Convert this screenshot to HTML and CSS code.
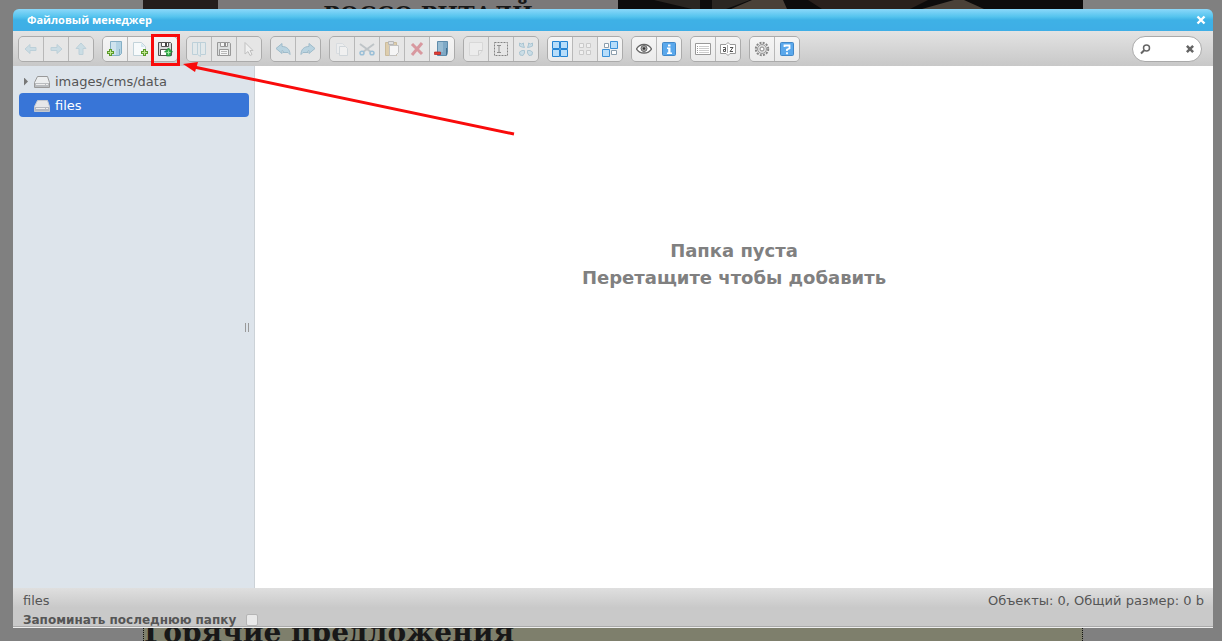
FILE: index.html
```html
<!DOCTYPE html>
<html lang="ru">
<head>
<meta charset="utf-8">
<title>Файловый менеджер</title>
<link rel="stylesheet" href="styles.css">
</head>
<body>
<div class="page" aria-hidden="true">
  <div class="page-column">
    <div class="page-top">
      <div class="photo-small"></div>
      <div class="promo">РОССО РИТАЛЙ</div>
      <svg class="photo-large" viewBox="0 0 465 9" preserveAspectRatio="none">
        <path fill="#0d0c0c" d="M0 0h465v9H0z"/>
        <path fill="#2a2622" d="M36 0h46v9H74zM94 0h38l-24 9H94z"/>
        <path fill="#4a4138" d="M134 0h31l4 9h-56zM336 0h10l20 9h-62z"/>
        <path fill="#2a211d" d="M190 0h120l-18 9H204z"/>
      </svg>
    </div>
    <div class="page-bottom">Горячие предложения</div>
  </div>
</div>

<main class="dialog">
  <header class="titlebar">
    <h1 class="title">Файловый менеджер</h1>
    <button class="close" type="button" aria-label="Закрыть"><svg width="10" height="10" viewBox="0 0 10 10"><path d="M1.5 1.5l7 7M8.5 1.5l-7 7" stroke="#fff" stroke-width="2.4"/></svg></button>
  </header>

  <div class="toolbar">
    <div class="group">
      <button class="tool off" type="button" aria-label="Назад"><svg class="icon" viewBox="0 0 16 16"><path fill="#a4cfe2" stroke="#7fb0c6" d="M2 8l5-4.500v3h6v3H7v3z"/></svg></button>
      <button class="tool off" type="button" aria-label="Вперёд"><svg class="icon" viewBox="0 0 16 16"><path fill="#a4cfe2" stroke="#7fb0c6" d="M14 8L9 3.500v3H3v3h6v3z"/></svg></button>
      <button class="tool off" type="button" aria-label="Вверх"><svg class="icon" viewBox="0 0 16 16"><path fill="#a4cfe2" stroke="#7fb0c6" d="M8 2l5 5.500h-3v6H6v-6H3z"/></svg></button>
    </div>
    <div class="group">
      <button class="tool" type="button" aria-label="Новая папка"><svg class="icon" viewBox="0 0 16 16"><path fill="#b3d3e4" stroke="#86afc5" d="M3.500.5h11v12l-2 2h-9z"/><path fill="#cfe3ee" d="M4 1h5v13H4z"/><path stroke="#86afc5" d="M12.500 8v6"/><path stroke="#5b9b2b" stroke-width="3" d="M3.500 8v7M0 11.500h7"/><path stroke="#c2e790" d="M3.500 9v5M1 11.500h5"/></svg></button>
      <button class="tool" type="button" aria-label="Новый файл"><svg class="icon" viewBox="0 0 16 16"><path fill="#f7fafb" stroke="#c3d3da" d="M1.500 1.500h8l4 4v9h-12z"/><path fill="#d5e8f0" d="M9 2v4h4z"/><path stroke="#5b9b2b" stroke-width="3" d="M12.500 8v7M9 11.500h7"/><path stroke="#c2e790" d="M12.500 9v5M10 11.500h5"/></svg></button>
      <button class="tool" type="button" aria-label="Загрузить файлы"><svg class="icon" viewBox="0 0 16 16"><path fill="#d8dadb" stroke="#555" d="M1.500 1.500h12l1 1v12h-13z"/><path fill="#fff" stroke="#555" d="M4.500 1.500h7v4h-7zM3.500 8.500h9v6h-9z"/><path fill="#444" d="M8 2h2v3H8z"/><path fill="#32ae4a" stroke="#178331" stroke-width=".7" d="M11.500 7l4 4h-2v4h-4v-4h-2z"/><path stroke="#a5eba6" d="M11.500 9.500v4M9.500 11.500h4"/></svg></button>
    </div>
    <div class="group">
      <button class="tool off" type="button" aria-label="Открыть"><svg class="icon" viewBox="0 0 16 16"><path fill="#dceaf0" stroke="#7fb0c6" d="M1.500 1.500h13v12h-5v2l-3-2h-5zM6.500 2v11M9.500 2v11"/></svg></button>
      <button class="tool half" type="button" aria-label="Сохранить"><svg class="icon" viewBox="0 0 16 16"><path fill="#d8dadb" stroke="#666" d="M1.500 1.500h12l1 1v12h-13z"/><path fill="#fff" stroke="#666" d="M4.500 1.500h7v4h-7zM3.500 8.500h9v6h-9z"/><path fill="#555" d="M8 2h2v3H8z"/><path stroke="#999" d="M5 10.500h6M5 12.500h6"/></svg></button>
      <button class="tool off" type="button" aria-label="Выбрать"><svg class="icon" viewBox="0 0 16 16"><path fill="#fff" stroke="#888" d="M4 1.500l8 8H9l2 4-2 1-2-4-3 2.500z"/></svg></button>
    </div>
    <div class="group">
      <button class="tool half" type="button" aria-label="Отменить"><svg class="icon" viewBox="0 0 16 16"><path fill="#9cc7dd" stroke="#6f9fb8" d="M1 7.500l6-5v3c5 0 8 3 8 8-1-1-1-1-2-2H8c1-1 0-2-1-2v3z"/></svg></button>
      <button class="tool half" type="button" aria-label="Повторить"><svg class="icon" viewBox="0 0 16 16"><path fill="#9cc7dd" stroke="#6f9fb8" d="M15 7.500l-6-5v3c-5 0-8 3-8 8 1-1 1-1 2-2h5c-1-1 0-2 1-2v3z"/></svg></button>
    </div>
    <div class="group">
      <button class="tool off" type="button" aria-label="Копировать"><svg class="icon" viewBox="0 0 16 16"><path fill="#f4f7f9" stroke="#c3ced6" d="M2.500 2.500h6l2 2v8h-8z"/><path fill="#fff" stroke="#aebdc8" d="M5.500 5.500h6l2 2v7h-8z"/></svg></button>
      <button class="tool half" type="button" aria-label="Вырезать"><svg class="icon" viewBox="0 0 16 16"><path stroke="#a3adb3" stroke-width="2" d="M1 3l11 8M15 3L4 11"/><ellipse cx="3" cy="12" rx="2" ry="1.800" fill="none" stroke="#6aa6cd" stroke-width="1.500"/><ellipse cx="13" cy="12" rx="2" ry="1.800" fill="none" stroke="#6aa6cd" stroke-width="1.500"/></svg></button>
      <button class="tool half" type="button" aria-label="Вставить"><svg class="icon" viewBox="0 0 16 16"><path fill="#d8bd88" stroke="#b89e6c" d="M1.500 1.500h11v13h-11z"/><path fill="#ddd" stroke="#999" d="M4.500.5h5v3h-5z"/><path fill="#fff" stroke="#aaa" d="M5.500 4.500h9v7l-3 3h-6z"/></svg></button>
      <button class="tool half" type="button" aria-label="Удалить"><svg class="icon" viewBox="0 0 16 16"><path stroke="#cf6570" stroke-width="3" d="M3 3l10 10M13 2L3 14"/></svg></button>
      <button class="tool" type="button" aria-label="Очистить папку"><svg class="icon" viewBox="0 0 16 16"><path fill="#7fa9c6" stroke="#5f8cab" d="M3.500.5h10v11l-1 3h-9z"/><path fill="#98bcd3" d="M4 1h5v10H4z"/><path stroke="#44718f" d="M12.500 7v7"/><path fill="#e13b33" stroke="#b12320" stroke-width=".7" d="M.5 11h6v2.500h-6z"/></svg></button>
    </div>
    <div class="group">
      <button class="tool off" type="button" aria-label="Дублировать"><svg class="icon" viewBox="0 0 16 16"><path fill="#f6f6f6" stroke="#c3c3c3" d="M1.500 1.500h13v8l-4 5h-9z"/><path fill="none" stroke="#aaa" d="M14.500 9.500h-4v5"/></svg></button>
      <button class="tool half" type="button" aria-label="Переименовать"><svg class="icon" viewBox="0 0 16 16"><path fill="none" stroke="#444" stroke-dasharray="2 1" d="M1.500 1.500h13v13h-13z"/><path stroke="#555" fill="none" d="M4 4.500h4M6 5v6M4 11.500h4"/></svg></button>
      <button class="tool half" type="button" aria-label="Изменить размер"><svg class="icon" viewBox="0 0 16 16"><path fill="#b9d8e7" stroke="#83afc5" d="M1.500 2l2 1 2-1v2l1 2.500L4 6 1.500 5zM14.500 2l-2 1-2-1v2l-1 2.500L12 6l2.500-1zM2 14l-.5-3L4 9.500l2.500 0V12L5 14.500zM14 14l.5-3L12 9.500l-2.500 0V12l1.500 2.500z"/></svg></button>
    </div>
    <div class="group">
      <button class="tool" type="button" aria-label="Выделить всё"><svg class="icon" viewBox="0 0 16 16"><path fill="#b7ddfa" stroke="#2584d3" d="M.5.5h7v7h-7zM8.500.5h7v7h-7zM.5 8.500h7v7h-7zM8.500 8.500h7v7h-7z"/></svg></button>
      <button class="tool off" type="button" aria-label="Снять выделение"><svg class="icon" viewBox="0 0 16 16"><path fill="#fff" stroke="#a0a0a0" d="M2.500 2.500h4v4h-4zM9.500 2.500h4v4h-4zM2.500 9.500h4v4h-4zM9.500 9.500h4v4h-4z"/></svg></button>
      <button class="tool" type="button" aria-label="Обратить выделение"><svg class="icon" viewBox="0 0 16 16"><path fill="#fff" stroke="#8c9eac" d="M2.500 2.500h4v4h-4zM9.500 9.500h5v4h-5z"/><path fill="#b7ddfa" stroke="#3a90d8" d="M8.500.5h7v7h-7zM.5 8.500h7v7h-7z"/></svg></button>
    </div>
    <div class="group">
      <button class="tool" type="button" aria-label="Просмотр"><svg class="icon" viewBox="0 0 16 16"><path fill="#fff" stroke="#666" stroke-width="1.300" d="M.5 8Q3 3.500 8 3.500T15.500 8Q13 12 8 12T.5 8z"/><circle cx="8" cy="7.500" r="3" fill="#aaa" stroke="#666"/><circle cx="8" cy="7.500" r="1.300" fill="#333"/></svg></button>
      <button class="tool" type="button" aria-label="Свойства"><svg class="icon" viewBox="0 0 16 16"><rect x="1.500" y="1.500" width="13" height="13" rx="1" fill="#5aa8ec" stroke="#4288c8"/><path fill="#fff" d="M7 3.500h2.500v2H7zM6 6.500h3.500v5H11V13H6v-1.500h1.200V8H6z"/></svg></button>
    </div>
    <div class="group">
      <button class="tool" type="button" aria-label="Список"><svg class="icon" viewBox="0 0 16 16"><path fill="#fff" stroke="#999" d="M.5 2.500h15v11H.5z"/><path stroke="#ccc" d="M4 5.500h10M4 7.500h10M4 9.500h10M4 11.500h10"/><path stroke="#999" stroke-dasharray="1 1" d="M2.500 5v8"/></svg></button>
      <button class="tool" type="button" aria-label="Сортировка"><svg class="icon" viewBox="0 0 16 16"><path fill="#fff" stroke="#999" d="M.5 3.500H6l2-2 2 2h5.500v9H10l-2 2-2-2H.5z"/><path fill="none" stroke="#555" d="M3 6.500h2.500v4h-2v-2h2M10 6.500h3l-3 4h3"/><path stroke="#aaa" d="M7.500 4v8"/></svg></button>
    </div>
    <div class="group">
      <button class="tool" type="button" aria-label="Настройки"><svg class="icon" viewBox="0 0 16 16"><circle cx="8" cy="8" r="6.200" fill="none" stroke="#888" stroke-width="2" stroke-dasharray="2 1.240"/><circle cx="8" cy="8" r="4.500" fill="#ddd" stroke="#999"/><circle cx="8" cy="8" r="2" fill="#fff" stroke="#888"/></svg></button>
      <button class="tool" type="button" aria-label="Помощь"><svg class="icon" viewBox="0 0 16 16"><rect x="1.500" y="1.500" width="13" height="13" rx="1" fill="#5aa8ec" stroke="#4288c8"/><path fill="none" stroke="#fff" stroke-width="1.800" d="M5.500 6V4.500h5v3L8 8.500V10M8 11.300v2"/></svg></button>
    </div>
    <label class="search">
      <svg width="11" height="11" viewBox="0 0 11 11"><circle cx="6.500" cy="4" r="3" fill="none" stroke="#666" stroke-width="1.500"/><path stroke="#666" stroke-width="2" d="M4.200 6.300L1 9.500"/></svg>
      <input class="search-input" type="text" aria-label="Поиск">
      <svg width="8" height="8" viewBox="0 0 9 9"><path stroke="#666" stroke-width="2.800" d="M1 1l7 7M8 1L1 8"/></svg>
    </label>
  </div>

  <div class="work">
    <nav class="tree">
      <a class="node" href="#data"><span class="twist"></span><svg class="drive" viewBox="0 0 16 14"><path fill="#eceeef" stroke="#999" d="M3.500 1.500h10l2 6v5H.5v-5z"/><path fill="#b9bcbf" d="M1 8h14v4H1z"/><path stroke="#eee" d="M2 9.500h9M12 9.500h2"/></svg>images/cms/data</a>
      <a class="node selected" href="#files"><span class="twist none"></span><svg class="drive" viewBox="0 0 16 14"><path fill="#e6e7e9" stroke="#c3c8d0" d="M3.500 1.500h10l2 6v5H.5v-5z"/><path fill="#b5b9c1" d="M1 8h14v4H1z"/><path stroke="#eee" d="M2 9.500h9M12 9.500h2"/></svg>files</a>
      <span class="handle"></span>
    </nav>
    <section class="files">
      <p class="empty">Папка пуста<br>Перетащите чтобы добавить</p>
    </section>
  </div>

  <footer class="footer">
    <div class="status"><span>files</span><span>Объекты: 0, Общий размер: 0 b</span></div>
    <div class="remember"><label for="remember">Запоминать последнюю папку</label><input class="check" id="remember" type="checkbox"></div>
  </footer>
</main>

<svg class="callout" width="380" height="110" viewBox="0 0 380 110" aria-hidden="true">
  <path fill="none" stroke="#f90b0b" stroke-width="3" d="M2.500 3.500h26v29h-26z"/>
  <path stroke="#f90b0b" stroke-width="3" d="M44 35l320 67"/>
  <path fill="#f90b0b" d="M33 32l15-2-3 10z"/>
</svg>
</body>
</html>
```
FILE: styles.css
```css
* { box-sizing: border-box; }

body {
  margin: 0;
  min-height: 100vh;
  padding: 9px 9px 13px 13px;
  display: flex;
  background: #808080;
  color: #555;
  font: 13px/24px Verdana, "DejaVu Sans", sans-serif;
}

/* Dimmed page behind the dialog */
.page {
  position: absolute;
  inset: 0;
  padding-left: 4px;
  display: flex;
  justify-content: center;
  overflow: hidden;
}
.page-column {
  width: 940px;
  display: flex;
  flex-direction: column;
  justify-content: space-between;
}
.page-top { display: flex; height: 9px; background: #7b7979; }
.photo-small { width: 75px; background: #241e1c; }
.promo {
  flex: 1;
  padding-left: 20px;
  color: #181818;
  font: bold 22px/28px "DejaVu Serif", serif;
  text-align: center;
}
.photo-large { width: 465px; height: 9px; }
.page-bottom {
  height: 16px;
  border: 1px dotted #111;
  border-width: 0 1px;
  background: #7e7f6c;
  color: #181818;
  font: bold 28px/16px "DejaVu Serif", serif;
  white-space: nowrap;
}

/* Dialog */
.dialog {
  position: relative;
  flex: 1;
  min-width: 0;
  display: flex;
  flex-direction: column;
  overflow: hidden;
  border-radius: 6px 6px 0 0;
}
.titlebar {
  height: 22px;
  padding: 0 7px 0 14px;
  display: flex;
  align-items: center;
  justify-content: space-between;
  background: linear-gradient(#8bd8fa, #55c4ee 35%, #3eb1e6 50%, #3eaee6);
}
.title { margin: 0; color: #fff; font: bold 11px/20px "Open Sans", sans-serif; }
.close { padding: 0; border: 0; background: none; display: flex; }

.toolbar {
  height: 35px;
  padding: 5px 11px 4px 5px;
  display: flex;
  gap: 8px;
  background: linear-gradient(#e3e3e3, #c8c8c8);
}
.group {
  display: flex;
  gap: 1px;
  overflow: hidden;
  height: 26px;
  border: 1px solid #ababab;
  border-radius: 5px;
  background: #b8b8b8;
}
.tool {
  width: 24px;
  padding: 0;
  border: 0;
  display: flex;
  align-items: center;
  justify-content: center;
  background: linear-gradient(#f5f5f5, #ebebeb);
}
.off, .half { background: #e6e6e6; }
.icon { width: 16px; height: 16px; fill: none; }
.off .icon { opacity: .4; }
.half .icon { opacity: .6; }
.search {
  width: 70px;
  height: 26px;
  margin-left: auto;
  padding: 0 7px;
  display: flex;
  align-items: center;
  border: 1px solid #aaa;
  border-radius: 13px;
  background: #fff;
}
.search-input { flex: 1; min-width: 0; border: 0; outline: 0; background: none; font: inherit; }

.work { flex: 1; display: flex; background: #fff; }
.tree {
  position: relative;
  width: 242px;
  padding: 3px 5px 3px 6px;
  border-right: 1px solid #ccd2d7;
  background: #dde4eb;
}
.node {
  height: 24px;
  padding: 1px 0 0 4px;
  display: flex;
  align-items: center;
  border-radius: 4px;
  color: #555;
  text-decoration: none;
}
.selected { background: #3875d7; color: #fff; }
.twist {
  width: 5px;
  height: 8px;
  margin-right: 6px;
  background: #777;
  clip-path: polygon(20% 0, 100% 50%, 20% 100%);
}
.none { visibility: hidden; }
.drive { width: 16px; height: 14px; margin-right: 5px; }
.handle {
  position: absolute;
  right: 5px;
  top: 50%;
  width: 4px;
  height: 9px;
  margin-top: -4px;
  border: 1px solid #999;
  border-width: 0 1px;
}
.files { flex: 1; padding-top: 171px; text-align: center; }
.empty { margin: 0; color: #808080; font-size: 18px; font-weight: bold; line-height: 27px; }

.footer {
  height: 40px;
  padding: 3px 9px 0 10px;
  border-bottom: 1px solid #eee;
  box-shadow: inset 0 -1px #aaa;
  background: linear-gradient(#dfdfdf, #c9c9c9 50%);
  line-height: 20px;
}
.status { display: flex; justify-content: space-between; }
.remember { display: flex; align-items: center; gap: 10px; height: 18px; font-size: 12px; font-weight: bold; }
.check {
  appearance: none;
  width: 12px;
  height: 12px;
  margin: 0;
  border: 1px solid #b5b5b5;
  border-radius: 2px;
  background: #e9e9e9;
}

/* Red frame and arrow drawn over the upload button */
.callout { position: absolute; left: 150px; top: 32px; pointer-events: none; }
```
